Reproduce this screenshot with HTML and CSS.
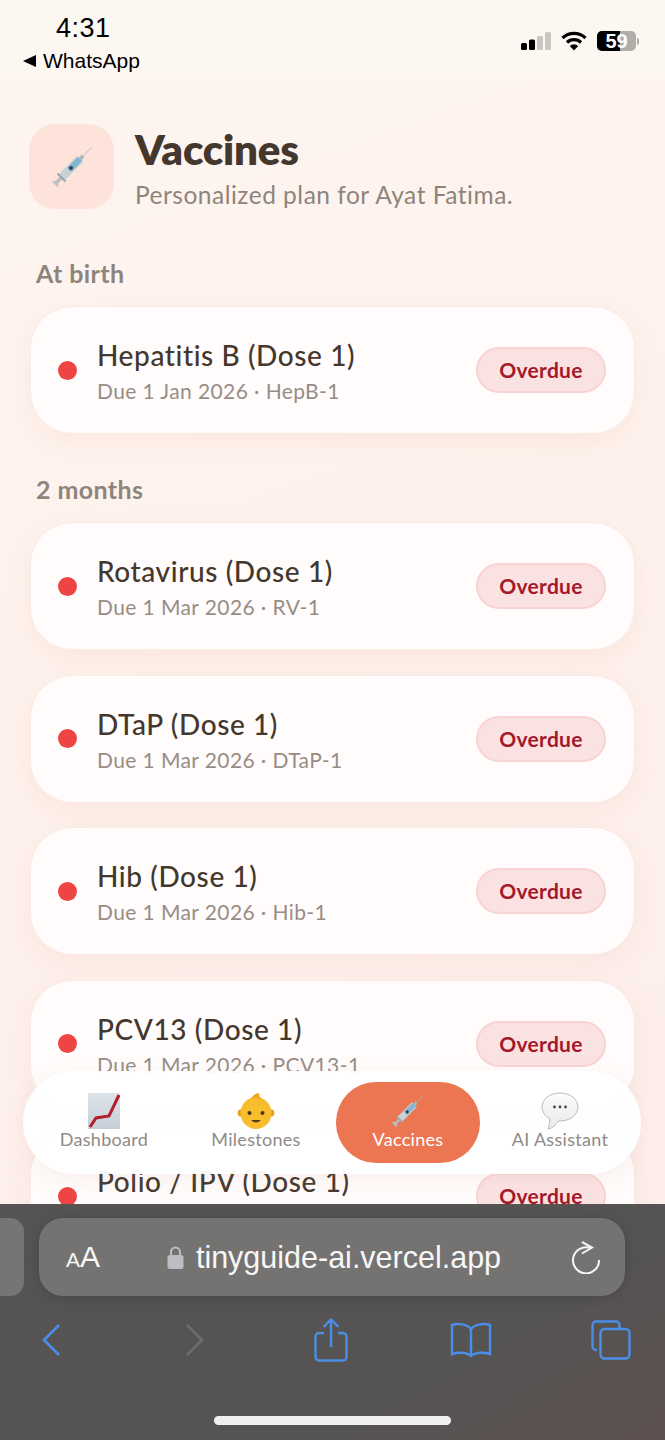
FILE: index.html
```html
<!DOCTYPE html>
<html lang="en">
<head>
  <meta charset="UTF-8">
  <meta name="viewport" content="width=device-width, initial-scale=1.0">
  <title>Vaccines</title>
  <link rel="stylesheet" href="styles.css">
</head>
<body>
  <svg class="defs" width="0" height="0" aria-hidden="true">
    <defs>
      <!-- syringe, drawn pointing up and right -->
      <symbol id="syringe" viewBox="0 0 40 40">
        <path d="M29 11 L39.500 0.500" stroke="#b4bbc0" stroke-width="0.900" fill="none"/>
        <path d="M27 13 L31 9" stroke="#a9b3ba" stroke-width="3.600" fill="none"/>
        <path d="M9 31 L28 12" stroke="#c7d1d7" stroke-width="8.500" fill="none"/>
        <path d="M17 23 L28 12" stroke="#82b5d1" stroke-width="6" fill="none"/>
        <path d="M4 36 L10 30" stroke="#b6bec4" stroke-width="3.400" fill="none"/>
        <path d="M5.500 26.500 L13.500 34.500" stroke="#98a2a9" stroke-width="1.800" fill="none"/>
        <path d="M1 34 L6 39" stroke="#bcc4ca" stroke-width="2.400" fill="none"/>
        <circle cx="19" cy="21" r="2" fill="#36414b"/>
      </symbol>
    </defs>
  </svg>

  <!-- Status Bar -->
  <header class="status-bar">
    <div class="status-left">
      <div class="status-time">4:31</div>
      <div class="status-back"><span class="back-arrow"></span>WhatsApp</div>
    </div>
    <div class="status-right">
      <svg width="30" height="18" viewBox="0 0 30 18">
        <rect x="0" y="11" width="6" height="7" rx="1.500" fill="#000"/>
        <rect x="8" y="7.500" width="6" height="10.500" rx="1.500" fill="#000"/>
        <rect x="16" y="4" width="6" height="14" rx="1.500" fill="#c9c7c4"/>
        <rect x="24" y="0" width="6" height="18" rx="1.500" fill="#c9c7c4"/>
      </svg>
      <svg width="26" height="20" viewBox="0 0 26 20">
        <path d="M1.500 7 A16.500 16.500 0 0 1 24.500 7" stroke="#000" stroke-width="3.200" fill="none"/>
        <path d="M6 11.500 A10 10 0 0 1 20 11.500" stroke="#000" stroke-width="3.200" fill="none"/>
        <path d="M13 19.500 L8.800 15 A6 6 0 0 1 17.200 15 Z" fill="#000"/>
      </svg>
      <div class="battery">
        <div class="battery-body"><span class="battery-fill"></span><span class="battery-num">59</span></div>
        <span class="battery-cap"></span>
      </div>
    </div>
  </header>

  <!-- Page -->
  <main class="page">
    <div class="page-head">
      <div class="head-icon"><svg width="40" height="40"><use href="#syringe"/></svg></div>
      <div>
        <h1>Vaccines</h1>
        <p>Personalized plan for Ayat Fatima.</p>
      </div>
    </div>

    <h2 class="group-label">At birth</h2>
    <div class="card-list">
      <div class="card">
        <span class="dot"></span>
        <div class="card-text">
          <div class="card-title">Hepatitis B (Dose 1)</div>
          <div class="card-sub">Due 1 Jan 2026 · HepB-1</div>
        </div>
        <span class="badge">Overdue</span>
      </div>
    </div>

    <h2 class="group-label">2 months</h2>
    <div class="card-list">
      <div class="card">
        <span class="dot"></span>
        <div class="card-text">
          <div class="card-title">Rotavirus (Dose 1)</div>
          <div class="card-sub">Due 1 Mar 2026 · RV-1</div>
        </div>
        <span class="badge">Overdue</span>
      </div>
      <div class="card">
        <span class="dot"></span>
        <div class="card-text">
          <div class="card-title">DTaP (Dose 1)</div>
          <div class="card-sub">Due 1 Mar 2026 · DTaP-1</div>
        </div>
        <span class="badge">Overdue</span>
      </div>
      <div class="card">
        <span class="dot"></span>
        <div class="card-text">
          <div class="card-title">Hib (Dose 1)</div>
          <div class="card-sub">Due 1 Mar 2026 · Hib-1</div>
        </div>
        <span class="badge">Overdue</span>
      </div>
      <div class="card">
        <span class="dot"></span>
        <div class="card-text">
          <div class="card-title">PCV13 (Dose 1)</div>
          <div class="card-sub">Due 1 Mar 2026 · PCV13-1</div>
        </div>
        <span class="badge">Overdue</span>
      </div>
      <div class="card">
        <span class="dot"></span>
        <div class="card-text">
          <div class="card-title">Polio / IPV (Dose 1)</div>
          <div class="card-sub">&nbsp;</div>
        </div>
        <span class="badge">Overdue</span>
      </div>
    </div>

    <!-- Floating Nav -->
    <nav class="float-nav">
      <a class="nav-item">
        <svg width="34" height="38" viewBox="0 0 34 38">
          <defs>
            <linearGradient id="chartBg" x1="0" y1="0" x2="0" y2="1">
              <stop offset="0" stop-color="#dfe4ea"/>
              <stop offset="1" stop-color="#c6ced7"/>
            </linearGradient>
          </defs>
          <rect x="1" y="1" width="32" height="36" fill="url(#chartBg)"/>
          <path d="M3 35 L9 26 L22 24 L32 3" stroke="#b01f2c" stroke-width="3" fill="none"/>
        </svg>
        <span>Dashboard</span>
      </a>
      <a class="nav-item">
        <svg width="38" height="38" viewBox="0 0 38 38">
          <circle cx="4.500" cy="21" r="3.800" fill="#e79d1c"/>
          <circle cx="33.500" cy="21" r="3.800" fill="#e79d1c"/>
          <ellipse cx="19" cy="21" rx="15.500" ry="16" fill="#f8bd2c"/>
          <path d="M14 7 C16 2 21 0 23 2 C21 3 23 6 26 8 C22 6 18 6 14 7 Z" fill="#eea71f"/>
          <circle cx="12.500" cy="21" r="2" fill="#4a3320"/>
          <circle cx="25.500" cy="21" r="2" fill="#4a3320"/>
          <path d="M14 28 Q19 33 24 28 Z" fill="#5b3a22"/>
        </svg>
        <span>Milestones</span>
      </a>
      <a class="nav-item active">
        <svg width="32" height="38"><use href="#syringe"/></svg>
        <span>Vaccines</span>
      </a>
      <a class="nav-item">
        <svg width="38" height="38" viewBox="0 0 38 38">
          <defs>
            <linearGradient id="bubbleBg" x1="0" y1="0" x2="0" y2="1">
              <stop offset="0" stop-color="#fbfbfb"/>
              <stop offset="1" stop-color="#e9eaeb"/>
            </linearGradient>
          </defs>
          <path d="M19 1 C29 1 37 7 37 15 C37 23 29 29 19 29 L17 29 C15 33 12 36 7 37 C8.500 33 9 30 8.500 26.500 C4 24 1 20 1 15 C1 7 9 1 19 1 Z" fill="url(#bubbleBg)" stroke="#b9bcbf" stroke-width="1"/>
          <circle cx="13.500" cy="15" r="1.400" fill="#444"/>
          <circle cx="19" cy="15" r="1.400" fill="#444"/>
          <circle cx="24.500" cy="15" r="1.400" fill="#444"/>
        </svg>
        <span>AI Assistant</span>
      </a>
    </nav>
  </main>

  <!-- Browser Chrome -->
  <footer class="browser">
    <div class="url-row">
      <div class="tab-edge"></div>
      <div class="url-bar">
        <span class="aa"><small>A</small>A</span>
        <div class="url">
          <svg width="17" height="23" viewBox="0 0 17 23">
            <path d="M4 10 V6 A4.500 4.500 0 0 1 13 6 V10" stroke="#bdbcc2" stroke-width="2" fill="none"/>
            <rect x="0.500" y="9" width="16" height="14" rx="2.500" fill="#bdbcc2"/>
          </svg>
          <span>tinyguide-ai.vercel.app</span>
        </div>
        <svg width="28" height="33" viewBox="0 0 28 33">
          <path d="M27 19 A13 13 0 1 1 18 7" stroke="#f5f5f5" stroke-width="2" fill="none"/>
          <path d="M10 1 L20 6.500 L10 12.500" stroke="#f5f5f5" stroke-width="2" fill="none"/>
        </svg>
      </div>
    </div>
    <div class="tool-row">
      <div class="tool">
        <svg width="20" height="34" viewBox="0 0 20 34">
          <path d="M18 2 L3 17 L18 32" stroke="#4a8fe7" stroke-width="2.600" fill="none"/>
        </svg>
      </div>
      <div class="tool tool-forward">
        <svg width="20" height="34" viewBox="0 0 20 34">
          <path d="M2 2 L17 17 L2 32" stroke="#6f6d6c" stroke-width="2.600" fill="none"/>
        </svg>
      </div>
      <div class="tool">
        <svg width="34" height="44" viewBox="0 0 34 44">
          <path d="M10 15 H5 A3.500 3.500 0 0 0 1.500 18.500 V39 A3.500 3.500 0 0 0 5 42.500 H29 A3.500 3.500 0 0 0 32.500 39 V18.500 A3.500 3.500 0 0 0 29 15 H24" stroke="#4a8fe7" stroke-width="2.400" fill="none"/>
          <path d="M17 29 V2 M9.500 9 L17 1.500 L24.500 9" stroke="#4a8fe7" stroke-width="2.400" fill="none"/>
        </svg>
      </div>
      <div class="tool">
        <svg width="44" height="36" viewBox="0 0 44 36">
          <path d="M22 7 C18 2 9 1 3 3 V32 C9 30 18 30 22 34 C26 30 35 30 41 32 V3 C35 1 26 2 22 7 Z M22 7 V34" stroke="#4a8fe7" stroke-width="2.400" fill="none"/>
        </svg>
      </div>
      <div class="tool">
        <svg width="40" height="40" viewBox="0 0 40 40">
          <path d="M6 30 H5 A3.500 3.500 0 0 1 1.500 26.500 V5 A3.500 3.500 0 0 1 5 1.500 H25 A3.500 3.500 0 0 1 28.500 5 V8" stroke="#4a8fe7" stroke-width="2.400" fill="none"/>
          <rect x="9.500" y="9" width="29" height="29.500" rx="4" stroke="#4a8fe7" stroke-width="2.400" fill="none"/>
        </svg>
      </div>
    </div>
    <div class="home-bar"></div>
  </footer>
</body>
</html>
```

FILE: styles.css
```css
/* Basic Reset */
* {
  box-sizing: border-box;
  margin: 0;
  padding: 0;
}

body {
  width: 665px;
  height: 1440px;
  display: flex;
  flex-direction: column;
  overflow: hidden;
  font-family: "Lato", "Noto Sans", sans-serif;
  color: #44372e;
  background: #fdf7f2;
}

.defs {
  position: absolute;
}

/* Status Bar */
.status-bar {
  height: 78px;
  flex: none;
  display: flex;
  justify-content: space-between;
  background: #fdf7f2;
  padding: 13px 26px 0 23px;
  color: #000;
}

.status-time {
  font-family: "Liberation Sans", sans-serif;
  font-size: 27px;
  line-height: 30px;
  padding-left: 33px;
  letter-spacing: 0.5px;
}

.status-back {
  display: flex;
  align-items: center;
  gap: 7px;
  margin-top: 6px;
  font-family: "Liberation Sans", sans-serif;
  font-size: 21px;
  line-height: 24px;
}

.back-arrow {
  width: 0;
  height: 0;
  border-top: 6px solid transparent;
  border-bottom: 6px solid transparent;
  border-right: 13px solid #000;
}

.status-right {
  display: flex;
  align-items: center;
  gap: 10px;
  height: 20px;
  margin-top: 18px;
}

.battery {
  display: flex;
  align-items: center;
  gap: 1px;
}

.battery-body {
  position: relative;
  width: 39px;
  height: 20px;
  border-radius: 5px;
  background: #b0aeab;
  overflow: hidden;
  color: #fff;
  font-family: "Liberation Sans", sans-serif;
  font-size: 20px;
  font-weight: 700;
  line-height: 20px;
  text-align: center;
}

.battery-fill {
  position: absolute;
  left: 0;
  top: 0;
  bottom: 0;
  width: 23px;
  background: #000;
}

.battery-num {
  position: relative;
}

.battery-cap {
  width: 2px;
  height: 7px;
  border-radius: 0 2px 2px 0;
  background: #b0aeab;
}

/* Page */
.page {
  position: relative;
  flex: 1;
  overflow: hidden;
  padding: 46px 30px 0;
  background: linear-gradient(160deg, #fef5f0 0%, #fef1ec 50%, #fdeeec 100%);
}

.page-head {
  display: flex;
  align-items: center;
  gap: 21px;
  height: 85px;
}

.head-icon {
  width: 85px;
  height: 85px;
  margin-left: -1px;
  border-radius: 26px;
  background: #fde3d9;
  display: flex;
  align-items: center;
  justify-content: center;
}

h1 {
  font-size: 42px;
  font-weight: 800;
  line-height: 50px;
  letter-spacing: -0.2px;
  color: #44372e;
}

.page-head p {
  margin-top: 6px;
  font-size: 24.5px;
  line-height: 30px;
  letter-spacing: 0.5px;
  color: #8f847c;
}

.group-label {
  margin: 50px 0 19px 6px;
  font-size: 25px;
  font-weight: 700;
  line-height: 28px;
  letter-spacing: 0.4px;
  color: #8f847c;
}

.card-list + .group-label {
  margin-top: 41px;
}

.card-list {
  display: flex;
  flex-direction: column;
  gap: 24.5px;
}

.card {
  display: flex;
  align-items: center;
  height: 128px;
  padding: 0 28px 0 27px;
  border: 1px solid #f9ebe6;
  border-radius: 42px;
  background: #fffcfb;
  box-shadow: 0 8px 24px rgba(230, 170, 140, 0.14);
}

.dot {
  width: 19px;
  height: 19px;
  flex: none;
  border-radius: 50%;
  background: #ee4444;
}

.card-text {
  flex: 1;
  margin-left: 20px;
  padding-top: 2px;
}

.card-title {
  font-size: 28px;
  line-height: 34px;
  font-weight: 500;
  letter-spacing: 0.6px;
  color: #44372e;
}

.card-sub {
  margin-top: 6px;
  font-size: 21px;
  line-height: 26px;
  letter-spacing: 0.4px;
  color: #978d86;
}

.badge {
  width: 130px;
  height: 46px;
  flex: none;
  border: 2px solid #f9d3d4;
  border-radius: 23px;
  background: #fbe2e2;
  color: #a5182a;
  font-size: 21px;
  font-weight: 700;
  line-height: 42px;
  letter-spacing: 0.3px;
  text-align: center;
}

/* Floating Nav */
.float-nav {
  position: absolute;
  left: 23px;
  top: 993px;
  width: 618px;
  height: 103px;
  display: grid;
  grid-template-columns: repeat(4, 1fr);
  gap: 8px;
  padding: 11px 9px;
  border-radius: 52px;
  background: rgba(255, 255, 255, 0.95);
  box-shadow: 0 6px 22px rgba(200, 150, 130, 0.12);
}

.nav-item {
  display: flex;
  flex-direction: column;
  align-items: center;
  padding-top: 10px;
  border-radius: 40px;
  font-size: 18px;
  line-height: 19px;
  letter-spacing: 0.3px;
  color: #8f8a85;
}

.nav-item.active {
  background: #ec7652;
  color: #fff;
}

/* Browser Chrome */
.browser {
  position: relative;
  height: 236px;
  flex: none;
  padding-top: 14px;
  background: linear-gradient(150deg, #565453 0%, #565453 70%, #5d5150 100%);
}

.url-row {
  display: flex;
  gap: 15px;
}

.tab-edge {
  width: 24px;
  height: 78px;
  border-radius: 0 14px 14px 0;
  background: #777573;
}

.url-bar {
  width: 586px;
  height: 78px;
  display: flex;
  align-items: center;
  padding: 0 25px 0 27px;
  border-radius: 24px;
  background: #757371;
  color: #f7f7f7;
  box-shadow: 0 2px 14px rgba(0, 0, 0, 0.15);
}

.aa {
  font-family: "Liberation Sans", sans-serif;
  font-size: 30px;
  width: 36px;
}

.aa small {
  font-size: 21px;
}

.url {
  flex: 1;
  display: flex;
  align-items: center;
  justify-content: center;
  gap: 12px;
  padding-right: 6px;
  font-family: "Liberation Sans", sans-serif;
  font-size: 30.5px;
}

.tool-row {
  display: flex;
  align-items: center;
  justify-content: space-between;
  height: 44px;
  margin-top: 22px;
  padding: 0 24px 0 21px;
}

.tool {
  width: 60px;
  display: flex;
  justify-content: center;
}

.tool-forward {
  padding-left: 8px;
}

.home-bar {
  position: absolute;
  left: 214px;
  bottom: 15px;
  width: 237px;
  height: 9px;
  border-radius: 5px;
  background: #f0f0f0;
}
```
